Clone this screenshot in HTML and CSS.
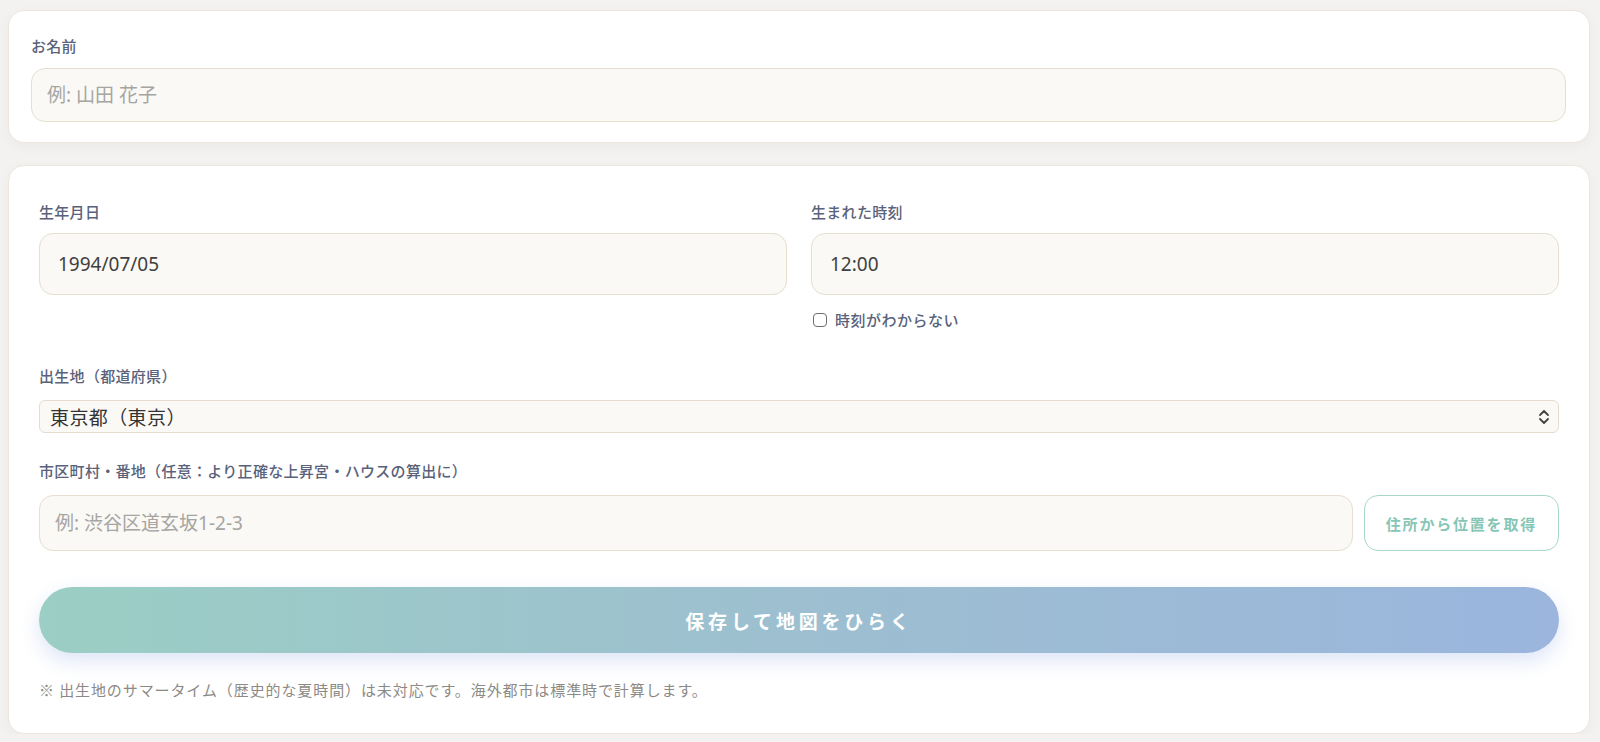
FILE: index.html
```html
<!DOCTYPE html>
<html lang="ja">

<head>
    <meta charset="UTF-8">
    <meta name="viewport" content="width=device-width, initial-scale=1.0">
    <title>出生情報の入力</title>
    <link rel="stylesheet" href="styles.css">
</head>

<body>
    <div class="page">
        <section class="card card-name">
            <label class="field-label" for="name">お名前</label>
            <input class="text-input" type="text" id="name" name="name" placeholder="例: 山田 花子">
        </section>

        <section class="card card-birth">
            <div class="row-two">
                <div class="form-group">
                    <label class="field-label tight" for="birth-date">生年月日</label>
                    <input class="text-input tall" type="text" id="birth-date" name="birth-date" value="1994/07/05">
                </div>
                <div class="form-group">
                    <label class="field-label tight" for="birth-time">生まれた時刻</label>
                    <input class="text-input tall" type="text" id="birth-time" name="birth-time" value="12:00">
                    <label class="check-row">
                        <input class="check" type="checkbox" name="time-unknown">
                        <span>時刻がわからない</span>
                    </label>
                </div>
            </div>

            <div class="form-group">
                <label class="field-label wide" for="pref">出生地（都道府県）</label>
                <div class="select-wrap">
                    <select class="select" id="pref" name="pref">
                        <option value="tokyo">東京都（東京）</option>
                        <option value="osaka">大阪府（大阪）</option>
                        <option value="hokkaido">北海道（札幌）</option>
                    </select>
                    <svg class="select-arrow" width="12" height="16" viewBox="0 0 12 16" fill="none">
                        <path d="M2 6 L6 2 L10 6" stroke="#444" stroke-width="1.8" stroke-linecap="round" stroke-linejoin="round" />
                        <path d="M2 10 L6 14 L10 10" stroke="#444" stroke-width="1.8" stroke-linecap="round" stroke-linejoin="round" />
                    </svg>
                </div>
            </div>

            <div class="form-group">
                <label class="field-label wide" for="address">市区町村・番地（任意：より正確な上昇宮・ハウスの算出に）</label>
                <div class="address-row">
                    <input class="text-input" type="text" id="address" name="address" placeholder="例: 渋谷区道玄坂1-2-3">
                    <button type="button" class="btn-outline">住所から位置を取得</button>
                </div>
            </div>

            <button type="submit" class="btn-main">保存して地図をひらく</button>

            <p class="note">※ 出生地のサマータイム（歴史的な夏時間）は未対応です。海外都市は標準時で計算します。</p>
        </section>
    </div>
</body>

</html>
```

FILE: styles.css
```css
body {
    margin: 0;
    padding: 0;
    background-color: #f3f2f0;
    font-family: "Noto Sans CJK JP", "Noto Sans", sans-serif;
    color: #3d3d3d;
}

.page {
    padding: 10px 10px 0 8px;
}

.card {
    background-color: #ffffff;
    border: 1px solid #ede7db;
    border-radius: 16px;
    box-shadow: 0 4px 14px rgba(0, 0, 0, 0.035);
}

.card-name {
    padding: 25px 23px 20px 22px;
}

.card-birth {
    margin-top: 22px;
    padding: 36px 30px 33px 30px;
}

.field-label {
    display: block;
    margin-bottom: 12px;
    font-size: 15px;
    line-height: 20px;
    font-weight: 500;
    letter-spacing: 0.3px;
    color: #59627a;
}

.field-label.tight {
    margin-bottom: 11px;
}

.field-label.wide {
    margin-bottom: 14px;
}

.text-input {
    display: block;
    width: 100%;
    height: 54px;
    padding: 0 15px;
    box-sizing: border-box;
    border: 1px solid #e6dfd0;
    border-radius: 14px;
    background-color: #faf9f6;
    font-family: "Noto Sans", "Noto Sans CJK JP", sans-serif;
    font-size: 19px;
    color: #404040;
    outline: none;
}

.text-input::placeholder {
    color: #a6a5a2;
}

.text-input.tall {
    height: 62px;
    padding: 0 18px;
}

.row-two {
    display: grid;
    grid-template-columns: 1fr 1fr;
    gap: 24px;
    margin-bottom: 36px;
}

.form-group {
    margin-bottom: 28px;
}

.row-two .form-group {
    margin-bottom: 0;
}

.check-row {
    display: flex;
    align-items: center;
    gap: 8px;
    margin-top: 15px;
    padding-left: 2px;
    font-size: 15px;
    line-height: 20px;
    font-weight: 500;
    letter-spacing: 0.5px;
    color: #59627a;
}

.check {
    appearance: none;
    margin: 0;
    width: 14px;
    height: 14px;
    border: 1.5px solid #6e6e6e;
    border-radius: 4px;
    background-color: #ffffff;
}

.select-wrap {
    position: relative;
}

.select {
    appearance: none;
    display: block;
    width: 100%;
    height: 33px;
    padding: 0 30px 0 10px;
    box-sizing: border-box;
    border: 1px solid #e4ddce;
    border-radius: 6px;
    background-color: #faf9f6;
    font-family: inherit;
    font-size: 19px;
    letter-spacing: 0.4px;
    color: #333333;
    outline: none;
}

.select-arrow {
    position: absolute;
    right: 9px;
    top: 9px;
    pointer-events: none;
}

.address-row {
    display: flex;
    gap: 11px;
}

.address-row .text-input {
    flex: 1;
    height: 56px;
}

.btn-outline {
    flex: none;
    height: 56px;
    padding: 0 21px;
    border: 1.5px solid #a6d7ca;
    border-radius: 14px;
    background-color: #ffffff;
    font-family: inherit;
    font-size: 15px;
    font-weight: bold;
    letter-spacing: 1.8px;
    color: #86c6b6;
    cursor: pointer;
}

.btn-main {
    display: block;
    width: 100%;
    height: 66px;
    margin-top: 36px;
    padding: 0;
    border: none;
    border-radius: 33px;
    background: linear-gradient(90deg, #9bcec4 0%, #9dbfd0 50%, #9bb5dd 100%);
    box-shadow: 0 8px 20px rgba(150, 175, 230, 0.32);
    font-family: inherit;
    font-size: 19px;
    font-weight: bold;
    letter-spacing: 3.8px;
    color: #ffffff;
    cursor: pointer;
}

.note {
    margin: 27px 0 0;
    font-size: 15px;
    line-height: 20px;
    letter-spacing: 0.9px;
    color: #8c8a86;
}
```
